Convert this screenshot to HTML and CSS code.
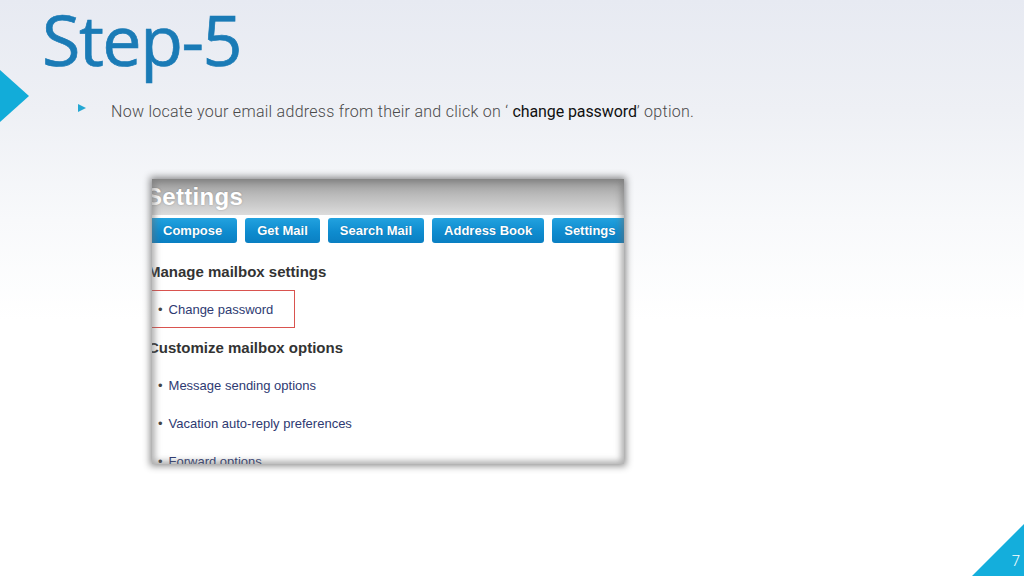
FILE: index.html
```html
<!DOCTYPE html>
<html>
<head>
<meta charset="utf-8">
<link rel="stylesheet" href="styles.css">
</head>
<body>
<div class="slide">
  <div class="tri-left"></div>
  <h1 class="title">Step-5</h1>
  <div class="point">
    <span class="point-mark"></span>
    <p class="point-text">Now locate your email address from their and click on ‘ <b>change password</b>’ option.</p>
  </div>
  <div class="shot">
    <div class="shot-head"><span class="shot-title">Settings</span></div>
    <div class="shot-tabs">
      <span class="tab tab-first">Compose</span>
      <span class="tab">Get Mail</span>
      <span class="tab">Search Mail</span>
      <span class="tab">Address Book</span>
      <span class="tab">Settings</span>
    </div>
    <div class="shot-body">
      <div class="row heading">Manage mailbox settings</div>
      <div class="row"><span class="link hl"><span class="dot">•</span>Change password</span></div>
      <div class="row heading">Customize mailbox options</div>
      <div class="row"><span class="link"><span class="dot">•</span>Message sending options</span></div>
      <div class="row"><span class="link"><span class="dot">•</span>Vacation auto-reply preferences</span></div>
      <div class="row"><span class="link"><span class="dot">•</span>Forward options</span></div>
    </div>
  </div>
  <div class="tri-corner"></div>
  <span class="page-num">7</span>
</div>
</body>
</html>
```

FILE: styles.css
```css
html, body {
  margin: 0;
  padding: 0;
}
body {
  width: 1024px;
  height: 576px;
  overflow: hidden;
  background: linear-gradient(180deg, #e7eaf2 0px, #eef0f5 110px, #f8f9fb 220px, #ffffff 320px);
}
.slide {
  position: relative;
  width: 1024px;
  height: 576px;
  padding-left: 42px;
  box-sizing: border-box;
  display: flex;
  flex-direction: column;
  align-items: flex-start;
}
.tri-left {
  position: absolute;
  left: 0;
  top: 70px;
  width: 0;
  height: 0;
  border-top: 26px solid transparent;
  border-bottom: 26px solid transparent;
  border-left: 29px solid #12acd9;
}
.title {
  margin: 4px 0 0 0;
  font-family: "Open Sans", sans-serif;
  font-weight: 400;
  font-size: 70px;
  line-height: 70px;
  letter-spacing: -1.5px;
  color: #1a7bb6;
  -webkit-text-stroke: 0.7px #1a7bb6;
}
.point {
  display: flex;
  align-items: center;
  margin: 25px 0 0 36px;
  height: 24px;
}
.point-mark {
  width: 0;
  height: 0;
  border-top: 4.5px solid transparent;
  border-bottom: 4.5px solid transparent;
  border-left: 8px solid #24a7d3;
  margin-right: 25px;
  margin-top: -6px;
}
.point-text {
  margin: 0;
  font-family: "Roboto", sans-serif;
  font-weight: 300;
  font-size: 16px;
  color: #4a4a4a;
  letter-spacing: 0.27px;
}
.point-text b {
  font-weight: 400;
  color: #111;
  letter-spacing: -0.1px;
}
.shot {
  position: relative;
  margin: 56px 0 0 110px;
  width: 472px;
  height: 285px;
  overflow: hidden;
  background: #fff;
  box-shadow: 0 0 7px 2px rgba(0,0,0,0.45);
  font-family: "Liberation Sans", Arial, sans-serif;
}
.shot::after {
  content: "";
  position: absolute;
  inset: 0;
  box-shadow: inset 0 0 6px 3px rgba(110,110,110,0.55);
  pointer-events: none;
}
.shot-head {
  height: 36px;
  background: linear-gradient(180deg, #989898 0%, #bbbbbb 45%, #dcdcdc 100%);
  display: flex;
  align-items: center;
}
.shot-title {
  margin-left: -6px;
  margin-top: 0;
  font-size: 24px;
  font-weight: 700;
  color: #fff;
  text-shadow: 0 0 2px rgba(0,0,0,0.25);
  letter-spacing: 0.3px;
}
.shot-tabs {
  display: flex;
  gap: 8px;
  margin-top: 3px;
  margin-left: -4px;
  background: #fff;
}
.tab {
  flex: none;
  height: 25px;
  line-height: 25px;
  padding: 0 12px;
  border-radius: 3px;
  background: linear-gradient(180deg, #22a2df 0%, #0f8ccf 55%, #0a7fc2 100%);
  color: #fff;
  font-size: 13px;
  font-weight: 700;
  text-shadow: 0 0 1px rgba(0,40,80,0.4);
}
.tab-first {
  padding: 0 15px;
}
.shot-body {
  padding-top: 9px;
}
.row {
  height: 38px;
  display: flex;
  align-items: center;
}
.heading {
  margin-left: -4px;
  font-size: 15px;
  font-weight: 700;
  color: #333;
  letter-spacing: 0;
}
.link {
  margin-left: 6px;
  font-size: 13px;
  color: #2e3a72;
}
.dot {
  margin-right: 6px;
  color: #444;
}
.link.hl {
  margin-left: -4px;
  height: 36px;
  width: 136px;
  padding-left: 9px;
  display: flex;
  align-items: center;
  border: 1.5px solid #d9534f;
}
.tri-corner {
  position: absolute;
  right: 0;
  bottom: 0;
  width: 0;
  height: 0;
  border-left: 52px solid transparent;
  border-bottom: 52px solid #14aedc;
}
.page-num {
  position: absolute;
  right: 4px;
  bottom: 6px;
  font-family: "Roboto", sans-serif;
  font-weight: 300;
  font-size: 15px;
  color: #fff;
}
```
